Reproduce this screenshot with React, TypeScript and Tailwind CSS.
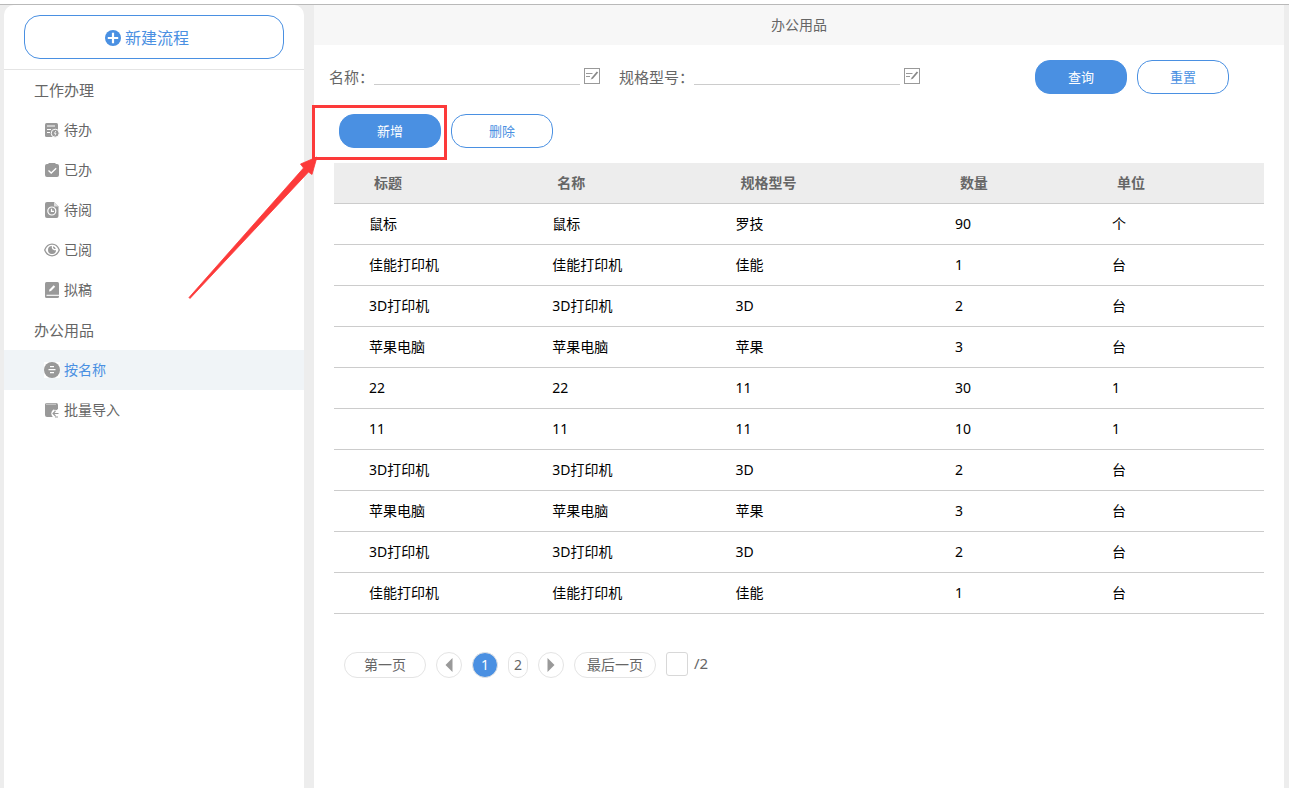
import { useState } from "react";
import type { ReactNode } from "react";
import clsx from "clsx";

type Item = {
  title: string;
  name: string;
  model: string;
  count: string;
  unit: string;
};

type MenuItem = {
  label: string;
  icon: ReactNode;
};

const rows: Item[] = [
  { title: "鼠标", name: "鼠标", model: "罗技", count: "90", unit: "个" },
  { title: "佳能打印机", name: "佳能打印机", model: "佳能", count: "1", unit: "台" },
  { title: "3D打印机", name: "3D打印机", model: "3D", count: "2", unit: "台" },
  { title: "苹果电脑", name: "苹果电脑", model: "苹果", count: "3", unit: "台" },
  { title: "22", name: "22", model: "11", count: "30", unit: "1" },
  { title: "11", name: "11", model: "11", count: "10", unit: "1" },
  { title: "3D打印机", name: "3D打印机", model: "3D", count: "2", unit: "台" },
  { title: "苹果电脑", name: "苹果电脑", model: "苹果", count: "3", unit: "台" },
  { title: "3D打印机", name: "3D打印机", model: "3D", count: "2", unit: "台" },
  { title: "佳能打印机", name: "佳能打印机", model: "佳能", count: "1", unit: "台" },
];

const headings = [
  { text: "标题", width: "w-[19.7%]" },
  { text: "名称", width: "w-[19.7%]" },
  { text: "规格型号", width: "w-[23.6%]" },
  { text: "数量", width: "w-[16.9%]" },
  { text: "单位", width: "" },
];

const Icon = ({ children }: { children: ReactNode }) => (
  <svg viewBox="0 0 16 16" className="size-4 shrink-0" fill="#999" aria-hidden="true">
    {children}
  </svg>
);

const TodoIcon = () => (
  <Icon>
    <rect x="1" y="1" width="13" height="14" rx="1.5" />
    <path d="M3 4h8M3 7.5h4M3 10.5h3" stroke="#fff" strokeWidth="1.2" />
    <circle cx="11.2" cy="11.2" r="4" stroke="#fff" />
    <path d="M11.8 9l-1.4 2.4h1.6l-1 2" stroke="#fff" strokeWidth="0.8" fill="none" />
  </Icon>
);

const DoneIcon = () => (
  <Icon>
    <path d="M3 2h1l1-1h6l1 1h1a2 2 0 0 1 2 2v9a2 2 0 0 1-2 2H3a2 2 0 0 1-2-2V4a2 2 0 0 1 2-2z" />
    <path d="M4.5 8.500l2.700 2.500 5-4.800" stroke="#fff" strokeWidth="1.300" fill="none" />
  </Icon>
);

const ToReadIcon = () => (
  <Icon>
    <path d="M3 0h7l4.500 4.500V14a2 2 0 0 1-2 2H3a2 2 0 0 1-2-2V2a2 2 0 0 1 2-2z" />
    <path d="M10 0v4.500h4.500z" fill="#ddd" />
    <circle cx="7.800" cy="9" r="4" stroke="#fff" strokeWidth="1.200" fill="none" />
    <path d="M7.500 6.800V9.300h2.500" stroke="#fff" strokeWidth="1.200" fill="none" />
  </Icon>
);

const ReadIcon = () => (
  <Icon>
    <path
      d="M0.700 8C2.300 4 5 2.200 8 2.200S13.700 4 15.300 8C13.700 12 11 13.800 8 13.800S2.300 12 0.700 8z"
      fill="#fff"
      stroke="#999"
      strokeWidth="1.300"
    />
    <path d="M8 4a4 4 0 1 0 4 4c-2.500 1-5-1.500-4-4z" />
    <path d="M9 4.200A4 4 0 0 1 11.800 7 2.600 2.600 0 0 1 9 4.200z" />
  </Icon>
);

const DraftIcon = () => (
  <Icon>
    <rect x="1" y="0" width="14" height="16" rx="1.500" />
    <path d="M5 9.500l.5-2L9.700 3.300l1.500 1.500L7 9z" fill="#fff" />
    <path d="M2.500 13.300H15" stroke="#fff" strokeWidth="1.100" />
  </Icon>
);

const NameIcon = () => (
  <Icon>
    <rect width="16" height="16" fill="#fff" />
    <circle cx="8" cy="8" r="8" />
    <path d="M6 4.700h4M4.500 7.700h7M6 10.700h4" stroke="#fff" strokeWidth="1.300" />
  </Icon>
);

const ImportIcon = () => (
  <Icon>
    <path d="M2.500 1H12a2 2 0 0 1 2 2v12H3a2 2 0 0 1-2-2V2.500A1.500 1.500 0 0 1 2.500 1z" />
    <path d="M2 2.200h10" stroke="#ddd" strokeWidth="0.900" />
    <circle cx="11.800" cy="11.500" r="4.500" fill="#fff" />
    <path
      d="M14.500 11.500H9M11.500 9L9 11.500l2.500 2.500M10 7.800l3-.3M11 15h3"
      stroke="#999"
      strokeWidth="1.100"
      fill="none"
    />
  </Icon>
);

const EditIcon = () => (
  <svg viewBox="0 0 16 16" className="size-4" fill="none" stroke="#999" aria-hidden="true">
    <rect x="0.5" y="0.5" width="15" height="15" />
    <path d="M2 5.500h6.500M2 8.500h4" />
    <path d="M13.500 4L8 10.500" stroke="#888" strokeWidth="1.800" />
    <path d="M7.800 9.800l-1.300 2 2.200-1.200z" fill="#888" stroke="none" />
  </svg>
);

const workMenu: MenuItem[] = [
  { label: "待办", icon: <TodoIcon /> },
  { label: "已办", icon: <DoneIcon /> },
  { label: "待阅", icon: <ToReadIcon /> },
  { label: "已阅", icon: <ReadIcon /> },
  { label: "拟稿", icon: <DraftIcon /> },
];

const supplyMenu: MenuItem[] = [
  { label: "按名称", icon: <NameIcon /> },
  { label: "批量导入", icon: <ImportIcon /> },
];

type MenuGroupProps = {
  title: string;
  items: MenuItem[];
  active: string;
  onSelect: (label: string) => void;
};

const MenuGroup = ({ title, items, active, onSelect }: MenuGroupProps) => (
  <section>
    <h2 className="h-10 pl-[30px] text-[15px] leading-10">{title}</h2>
    <ul>
      {items.map((item) => (
        <li key={item.label}>
          <a
            href="#"
            onClick={() => onSelect(item.label)}
            className={clsx(
              "flex h-10 items-center gap-1 pl-10 text-sm",
              active === item.label && "bg-[#f0f4f7] text-[#4a90e2]"
            )}
          >
            {item.icon}
            {item.label}
          </a>
        </li>
      ))}
    </ul>
  </section>
);

type ActionButtonProps = {
  children: ReactNode;
  primary?: boolean;
  wide?: boolean;
};

const ActionButton = ({ children, primary, wide }: ActionButtonProps) => (
  <button
    type="button"
    className={clsx(
      "h-[34px] rounded-[15px] border border-[#4a90e2] pt-px text-[13px]",
      primary ? "bg-[#4a90e2] text-white" : "bg-white text-[#4a90e2]",
      wide ? "w-[102px]" : "w-[92px]"
    )}
  >
    {children}
  </button>
);

const SearchField = ({ id, label }: { id: string; label: string }) => {
  const [value, setValue] = useState("");
  return (
    <div className="flex items-center">
      <label htmlFor={id} className="text-[15px]">
        {label}：
      </label>
      <input
        id={id}
        type="text"
        value={value}
        onChange={(e) => setValue(e.target.value)}
        className="h-4 w-[206px] border-b border-[#ccc] text-sm outline-none"
      />
      <button type="button" aria-label={label} className="ml-1 pb-0.5">
        <EditIcon />
      </button>
    </div>
  );
};

// Red frame and arrow pointing at the add button
const Callout = () => (
  <>
    <span className="pointer-events-none absolute -top-[9px] -left-[27px] h-[55px] w-[135px] border-3 border-[#fc3a3a]" />
    <svg
      viewBox="0 0 130 144"
      className="pointer-events-none absolute top-[42px] -left-[151px] h-[144px] w-[130px]"
      fill="#fc3a3a"
      aria-hidden="true"
    >
      <path
        d="M1 141.500L115.500 12 112.500 8 129 1 124 18.500 120.500 16 2 142.500z"
        stroke="#fc3a3a"
        strokeWidth="0.800"
      />
    </svg>
  </>
);

const Sidebar = () => {
  const [active, setActive] = useState("按名称");
  return (
    <aside className="w-[300px] shrink-0 rounded-t-[10px] bg-white">
      <div className="border-b border-[#e4e4e4] px-5 py-2.5">
        <button
          type="button"
          className="flex h-11 w-full items-center justify-center gap-1 rounded-2xl border border-[#4a90e2] pt-0.5 pr-3.5 text-base text-[#4a90e2]"
        >
          <svg viewBox="0 0 16 16" className="size-4" aria-hidden="true">
            <circle cx="8" cy="8" r="8" fill="#4a90e2" />
            <path d="M8 2.800v10.400M2.800 8h10.400" stroke="#fff" strokeWidth="2.200" />
          </svg>
          新建流程
        </button>
      </div>
      <nav>
        <MenuGroup title="工作办理" items={workMenu} active={active} onSelect={setActive} />
        <MenuGroup title="办公用品" items={supplyMenu} active={active} onSelect={setActive} />
      </nav>
    </aside>
  );
};

const SupplyTable = () => (
  <table className="w-full table-fixed text-left text-sm">
    <thead>
      <tr className="h-10 border-b border-[#ccc] bg-[#ededed]">
        {headings.map((heading) => (
          <th key={heading.text} className={clsx("pl-10 font-bold", heading.width)}>
            {heading.text}
          </th>
        ))}
      </tr>
    </thead>
    <tbody className="text-black">
      {rows.map((row, index) => (
        <tr key={index} className="h-[41px] border-b border-[#ccc]">
          <td className="pl-[35px]">{row.title}</td>
          <td className="pl-[35px]">{row.name}</td>
          <td className="pl-[35px]">{row.model}</td>
          <td className="pl-[35px]">{row.count}</td>
          <td className="pl-[35px]">{row.unit}</td>
        </tr>
      ))}
    </tbody>
  </table>
);

const Pagination = () => {
  const [page, setPage] = useState(1);
  const [target, setTarget] = useState("");
  const base = "flex h-[26px] items-center justify-center rounded-[13px] border border-[#e4e4e4]";
  return (
    <div className="mt-[38px] flex gap-2.5 pl-2.5 text-sm">
      <button type="button" className={clsx(base, "w-[82px]")} onClick={() => setPage(1)}>
        第一页
      </button>
      <button type="button" aria-label="上一页" className={clsx(base, "w-[26px]")} onClick={() => setPage(1)}>
        <svg viewBox="0 0 8 14" className="h-3.5 w-2" fill="#999">
          <path d="M7.500 0v14L0.500 7z" />
        </svg>
      </button>
      {[1, 2].map((num) => (
        <button
          key={num}
          type="button"
          onClick={() => setPage(num)}
          className={clsx(base, page === num ? "w-[26px] bg-[#4a90e2] text-white" : "w-5")}
        >
          {num}
        </button>
      ))}
      <button type="button" aria-label="下一页" className={clsx(base, "w-[26px]")} onClick={() => setPage(2)}>
        <svg viewBox="0 0 8 14" className="h-3.5 w-2" fill="#999">
          <path d="M0.500 0v14L7.500 7z" />
        </svg>
      </button>
      <button type="button" className={clsx(base, "w-[82px]")} onClick={() => setPage(2)}>
        最后一页
      </button>
      <label className="flex h-6 items-center gap-1.5 text-[15px]">
        <input
          type="text"
          value={target}
          onChange={(e) => setTarget(e.target.value)}
          className="h-6 w-[22px] rounded-[3px] border border-[#d8d8d8] text-center"
        />
        /2
      </label>
    </div>
  );
};

const App = () => {
  return (
    <div className="flex min-h-screen flex-col bg-white pt-1 font-['Noto_Sans','Noto_Sans_CJK_SC',sans-serif] text-[#666]">
      <div className="flex grow gap-2.5 border-t border-[#b9b9b9] bg-[#ededed] pr-[5px] pl-1">
        <Sidebar />
        <main className="min-w-0 grow bg-white">
          <h1 className="h-10 bg-[#f7f7f7] text-center text-sm leading-10">办公用品</h1>
          <form className="flex items-center gap-[19px] pt-[15px] pr-[55px] pl-[15px]">
            <SearchField id="name" label="名称" />
            <SearchField id="model" label="规格型号" />
            <div className="ml-auto flex gap-2.5">
              <ActionButton primary>查询</ActionButton>
              <ActionButton>重置</ActionButton>
            </div>
          </form>
          <div className="flex gap-2.5 pt-5 pb-[15px] pl-[25px]">
            <div className="relative">
              <ActionButton primary wide>
                新增
              </ActionButton>
              <Callout />
            </div>
            <ActionButton wide>删除</ActionButton>
          </div>
          <div className="px-5">
            <SupplyTable />
            <Pagination />
          </div>
        </main>
      </div>
    </div>
  );
};

export default App;
